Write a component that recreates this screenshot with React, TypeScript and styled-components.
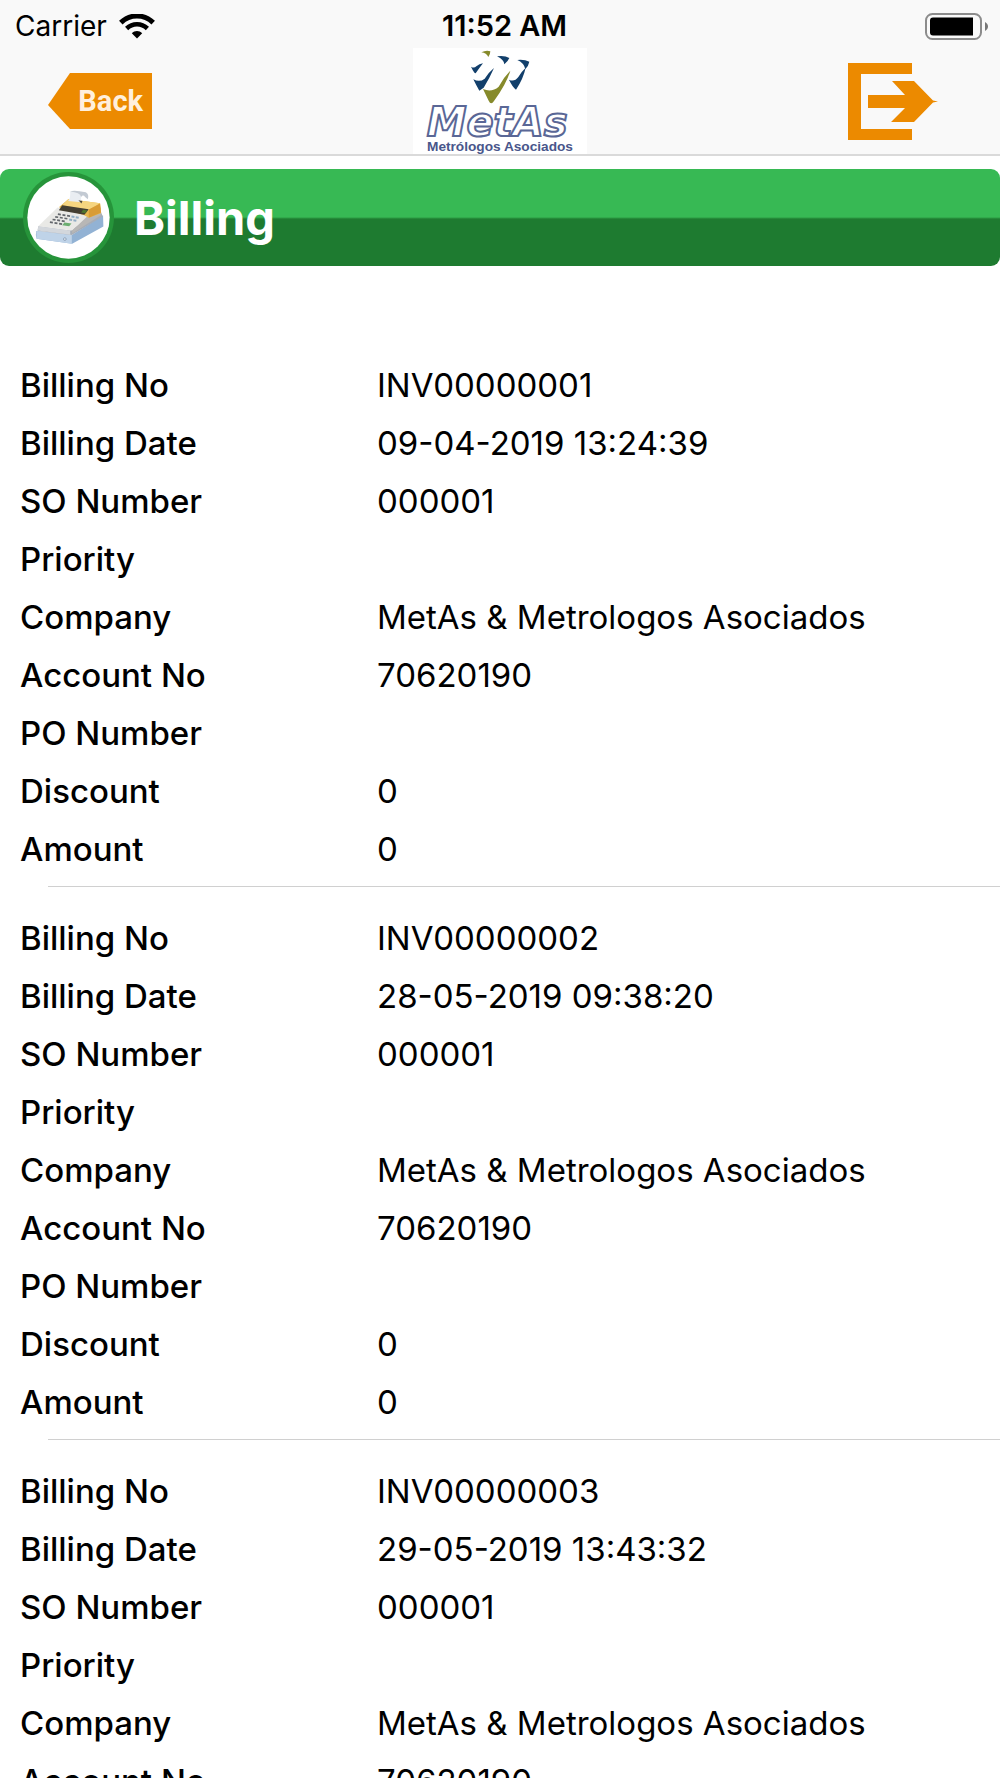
import React from "react";
import styled, { createGlobalStyle } from "styled-components";

const GlobalStyle = createGlobalStyle`
  *, *::before, *::after { box-sizing: border-box; }
  body { margin: 0; background: #fff; color: #000; font-family: Inter, "Liberation Sans", sans-serif; }
`;

const Screen = styled.div`
  display: flex;
  flex-direction: column;
  height: 100vh;
  overflow: hidden;
`;

const TopArea = styled.header`
  flex: none;
  background: #f9f9f9;
  border-bottom: 2px solid #dadada;
`;

const StatusBar = styled.div`
  display: grid;
  grid-template-columns: 1fr auto 1fr;
  align-items: center;
  height: 48px;
  padding: 4px 12px 0 15px;
  font-size: 28px;
  line-height: 44px;
`;

const Carrier = styled.span`
  display: flex;
  align-items: center;
  gap: 12px;
`;

const Clock = styled.time`
  margin-left: 6px;
  font-size: 29px;
  font-weight: 600;
`;

const BatterySlot = styled.span`
  display: flex;
  justify-content: flex-end;
`;

const NavBar = styled.nav`
  display: grid;
  grid-template-columns: 1fr auto 1fr;
  align-items: center;
  height: 106px;
  padding: 0 61px 0 48px;
`;

const BackButton = styled.button`
  justify-self: start;
  width: 104px;
  height: 56px;
  padding: 0 9px 0 0;
  border: 0;
  background: #ec8a00;
  clip-path: polygon(22px 0, 100% 0, 100% 100%, 22px 100%, 0 57%);
  color: #fff0dd;
  font: 700 29px/56px Roboto, "Liberation Sans", sans-serif;
  text-align: right;
  cursor: pointer;
`;

const ExitButton = styled.button`
  justify-self: end;
  display: flex;
  padding: 0;
  border: 0;
  background: none;
  cursor: pointer;
`;

const Logo = styled.svg`
  display: block;
  margin-left: 13px;
  background: #fff;
`;

const Banner = styled.div`
  flex: none;
  display: flex;
  align-items: center;
  gap: 20px;
  height: 97px;
  margin-top: 13px;
  padding-left: 23px;
  border-radius: 9px;
  background: linear-gradient(#37b954 0 48px, #1e7b30 50px 100%);
`;

const Title = styled.h1`
  margin: 0;
  color: #fff;
  font-size: 47px;
  font-weight: 700;
  line-height: 56px;
`;

const RecordList = styled.ul`
  flex: 1;
  min-height: 0;
  margin: 0;
  padding: 68px 0 0;
  overflow-y: auto;
  scrollbar-width: none;
  list-style: none;
`;

const RecordItem = styled.li`
  padding: 22px 0 8px 20px;

  & + &::before {
    content: "";
    display: block;
    height: 1px;
    margin: -22px 0 22px 28px;
    background: #d0d0d0;
  }
`;

const Fields = styled.dl`
  margin: 0;
`;

const Field = styled.div`
  display: grid;
  grid-template-columns: 357px 1fr;
  height: 58px;
  font-size: 33px;
  line-height: 58px;
`;

const Label = styled.dt`
  font-weight: 500;
`;

const Value = styled.dd`
  margin: 0;
`;

const WifiIcon = () => (
  <svg width="36" height="25" viewBox="0 0 36 25" aria-hidden="true">
    <g fill="none" stroke="#000">
      <path d="M1.8 8.6C11-.3 25-.3 34.2 8.6" strokeWidth="5" />
      <path d="M7.6 14.5C13.6 8.8 22.4 8.8 28.4 14.5" strokeWidth="4.6" />
    </g>
    <path d="M12.8 19.2c3-2.8 7.4-2.8 10.4 0L18 24.6z" />
  </svg>
);

const BatteryIcon = () => (
  <svg width="63" height="27" viewBox="0 0 63 27" role="img" aria-label="Battery">
    <rect x="1" y="1" width="55" height="25" rx="6.5" fill="none" stroke="#8c8c8c" strokeWidth="2" />
    <path d="M8 4.5h40v18H8a3 3 0 0 1-3-3v-12a3 3 0 0 1 3-3z" />
    <path d="M60 9c4 2 4 7 0 9z" fill="#777" />
  </svg>
);

const ExitIcon = () => (
  <svg width="91" height="79" viewBox="0 0 91 79" fill="#ec8a00" aria-hidden="true">
    <path d="M0 1h64v11H13v55h51v11H0z" />
    <path d="M20 33h37L44 19h22l19 19.500 5 1-5 1L66 60H43l14-14H20z" />
  </svg>
);

const CompanyLogo = () => (
  <Logo width="174" height="106" viewBox="69 144 522 318" role="img" aria-label="MetAs Metrólogos Asociados">
    <g fill="#123f6b">
      <path d="M243 200Q252 206 259 199Q268 191 279 190Q268 204 257 220Q252 219 243 200z" />
      <path d="M321 169Q345 166 358 174Q354 184 343 193Q342 179 321 169z" />
      <path d="M382 180Q404 178 418 185Q416 197 406 207Q401 188 382 180z" />
      <path d="M250 238Q269 248 284 236Q294 219 312 204Q300 232 281 263L268 272Q258 255 250 238z" />
      <path d="M357 239Q373 247 385 231Q394 215 407 203Q400 236 378 269Q368 262 357 239z" />
    </g>
    <g fill="#868a2b">
      <path d="M274 157Q289 149 301 154Q301 163 295 171Q290 159 274 157z" />
      <path d="M279 267Q305 278 326 260Q340 233 361 212Q350 251 312 303Q303 317 296 302Z" />
    </g>
    <text x="110" y="409" fill="#fff" stroke="#5a6796" strokeWidth="6" fontFamily="'DejaVu Sans', sans-serif" fontWeight="700" fontStyle="italic" fontSize="120">MetAs</text>
    <text x="111" y="452" fill="#49568b" fontFamily="'Liberation Sans', sans-serif" fontWeight="700" fontSize="41">Metrólogos Asociados</text>
  </Logo>
);

const RegisterIcon = () => (
  <svg width="91" height="91" viewBox="66 50 274 274" aria-hidden="true">
    <circle cx="203" cy="187" r="137" fill="#26943a" />
    <circle cx="203" cy="187" r="124" fill="#fff" />
    <path d="M106 228L213 240L307 180L308 214L214 266L107 251Q103 240 106 228z" fill="#92b2d4" />
    <path d="M106 228L213 240V266L107 251z" fill="#bfd3e8" />
    <path d="M112 213L208 226L300 168L306 184L213 240L110 227z" fill="#a6adb7" />
    <path d="M112 213L170 157L262 181L214 226z" fill="#e9e9e6" />
    <path d="M112 213L208 226V239L110 226z" fill="#d3d7dc" />
    <path d="M214 226L262 181L300 157V180L214 235z" fill="#b8b7b6" />
    <path d="M174 156L203 131L298 144L301 174L264 188L250 180z" fill="#e7b950" />
    <path d="M203 131L298 144L262 166L185 149z" fill="#f6d580" />
    <path d="M184 150L264 162L251 179L174 165z" fill="#443f32" />
    <path d="M247 164L260 166L253 174L241 172z" fill="#4f762d" />
    <path d="M264 163L298 145L301 172L264 188z" fill="#d99c36" />
    <path d="M202 137Q210 128 208 109L247 110Q238 120 242 141z" fill="#e9edf2" />
    <path d="M208 109Q218 103 255 111Q266 117 261 132L253 125Q247 117 241 125Q238 112 208 109z" fill="#c3cad3" />
    <path d="M233 135L245 137L242 145z" fill="#514a3c" />
    <g fill="none" stroke="#62666b" strokeWidth="5" strokeDasharray="9 5">
      <path d="M171 177L208 183" />
      <path d="M163 185L202 191" />
      <path d="M155 193L195 199" />
      <path d="M147 201L184 207" />
    </g>
    <g fill="none" stroke="#91adc4" strokeWidth="6" strokeDasharray="9 4">
      <path d="M212 184L236 188" />
      <path d="M205 193L228 197" />
    </g>
    <path d="M191 202L212 205L205 213L184 210z" fill="#6cae70" />
    <circle cx="192" cy="252" r="4" fill="#e8edf5" stroke="#7188a1" strokeWidth="2" />
  </svg>
);

interface Invoice {
  billingNo: string;
  billingDate: string;
  soNumber: string;
  priority: string;
  company: string;
  accountNo: string;
  poNumber: string;
  discount: string;
  amount: string;
}

const columns: [keyof Invoice, string][] = [
  ["billingNo", "Billing No"],
  ["billingDate", "Billing Date"],
  ["soNumber", "SO Number"],
  ["priority", "Priority"],
  ["company", "Company"],
  ["accountNo", "Account No"],
  ["poNumber", "PO Number"],
  ["discount", "Discount"],
  ["amount", "Amount"],
];

const makeInvoice = (billingNo: string, billingDate: string): Invoice => ({
  billingNo,
  billingDate,
  soNumber: "000001",
  priority: "",
  company: "MetAs & Metrologos Asociados",
  accountNo: "70620190",
  poNumber: "",
  discount: "0",
  amount: "0",
});

const invoices = [
  makeInvoice("INV00000001", "09-04-2019 13:24:39"),
  makeInvoice("INV00000002", "28-05-2019 09:38:20"),
  makeInvoice("INV00000003", "29-05-2019 13:43:32"),
];

export default function App() {
  return (
    <Screen>
      <GlobalStyle />
      <TopArea>
        <StatusBar>
          <Carrier>
            Carrier
            <WifiIcon />
          </Carrier>
          <Clock>11:52 AM</Clock>
          <BatterySlot>
            <BatteryIcon />
          </BatterySlot>
        </StatusBar>
        <NavBar>
          <BackButton type="button">Back</BackButton>
          <CompanyLogo />
          <ExitButton type="button" aria-label="Log out">
            <ExitIcon />
          </ExitButton>
        </NavBar>
      </TopArea>
      <Banner>
        <RegisterIcon />
        <Title>Billing</Title>
      </Banner>
      <RecordList>
        {invoices.map((invoice) => (
          <RecordItem key={invoice.billingNo}>
            <Fields>
              {columns.map(([key, label]) => (
                <Field key={key}>
                  <Label>{label}</Label>
                  <Value>{invoice[key]}</Value>
                </Field>
              ))}
            </Fields>
          </RecordItem>
        ))}
      </RecordList>
    </Screen>
  );
}
